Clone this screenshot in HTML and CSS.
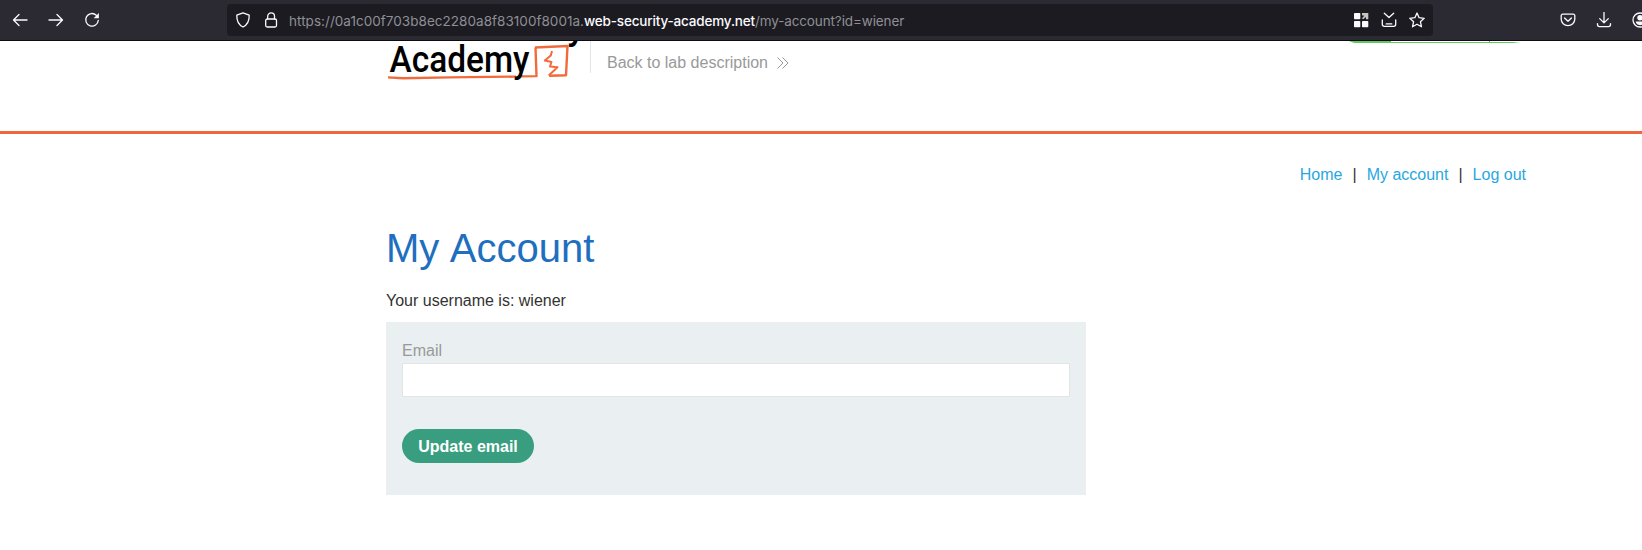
FILE: index.html
```html
<!DOCTYPE html>
<html lang="en">
<head>
<meta charset="utf-8">
<title>My Account</title>
<link rel="stylesheet" href="styles.css">
</head>
<body>
<div class="toolbar">
  <div class="nav-buttons">
    <svg class="icon" viewBox="0 0 16 16"><path d="M15 8H2M7 2.5 1.5 8 7 13.5"/></svg>
    <svg class="icon" viewBox="0 0 16 16"><path d="M1 8h13M9 2.5 14.5 8 9 13.5"/></svg>
    <svg class="icon" viewBox="0 0 16 16"><path d="M12.3 3.2A6.3 6.3 0 1 0 14.3 8.3"/><path class="solid" d="M14.9 1v5.2H9.6z"/></svg>
  </div>
  <div class="urlbar">
    <svg class="icon" viewBox="0 0 16 16"><path d="M8 .9 14.2 3.2C14.4 8.500 12.6 12.600 8 15 3.400 12.600 1.600 8.500 1.800 3.200z"/></svg>
    <svg class="icon lock" viewBox="0 0 16 16"><rect x="2.700" y="7" width="10.800" height="8" rx="1.500"/><path d="M4.700 7V4.300a3.400 3.400 0 0 1 6.800 0V7"/></svg>
    <div class="url"><span class="sub">https://0a1c00f703b8ec2280a8f83100f8001a.</span><span class="domain">web-security-academy.net</span><span class="path">/my-account?id=wiener</span></div>
    <svg class="icon" viewBox="0 0 16 16"><g class="solid"><rect x="1" y="1" width="6.300" height="6.300" rx=".8"/><rect x="1" y="8.900" width="6.300" height="6.300" rx=".8"/><rect x="9" y="8.900" width="6.300" height="6.300" rx=".8"/><path class="dim" d="M9 1h6.300v6.300h-2.200L12.700 5 10.200 7.300 9 6.200 11.300 3.700 9 3.200z"/></g></svg>
    <svg class="icon inbox" viewBox="0 0 16 16"><path d="M3.300 1.300 8 5.600l4.700-4.300M1.300 8v4.300a2 2 0 0 0 2 2h9.400a2 2 0 0 0 2-2V8M5.200 11.900h5.600"/></svg>
    <svg class="icon" viewBox="0 0 16 16"><path d="m8 1 2.100 4.700 5.100.6-3.800 3.400 1.100 5.100L8 12.200l-4.500 2.600 1.100-5.100L.8 6.300l5.100-.6z"/></svg>
  </div>
  <div class="tools">
    <svg class="icon" viewBox="0 0 16 16"><path d="M2.600 2.200h10.800a1.400 1.400 0 0 1 1.400 1.400v3.700a6.800 6.300 0 0 1-13.600 0V3.600a1.400 1.400 0 0 1 1.400-1.400zM4.600 6 8 9.300 11.400 6"/></svg>
    <svg class="icon" viewBox="0 0 16 16"><path d="M8 .5v10.200M3.700 6.600 8 10.900l4.300-4.300M1.500 11.600v1a2 2 0 0 0 2 2h9a2 2 0 0 0 2-2v-1"/></svg>
    <svg class="icon" viewBox="0 0 16 16"><circle cx="8" cy="8" r="7"/><circle class="solid" cx="8" cy="5.800" r="2.700"/><path class="solid" d="M3.600 9.600h8.800A4.600 4.600 0 0 1 8 13.200a4.600 4.600 0 0 1-4.400-3.600z"/></svg>
  </div>
</div>
<header class="lab-header">
  <div class="brand">
    <svg class="logo" viewBox="386 41 204 42" width="204" height="42">
      <path class="sketch" d="M388 77.400 403 78.200 450 77.400 516 76.600M520 76.400l16.500-.3L535.500 47.500"/>
      <path class="sketch" d="M535 47.500 567.500 46 566 75.200 550 75.800 549.500 74"/>
      <path class="sketch thin" d="M552 51 550.800 55.500 544.800 60.500 551.500 62 550 66.500 557.500 67.200 549 75.300"/>
      <text class="logo-text" x="389.500" y="72.300" textLength="140" lengthAdjust="spacingAndGlyphs">Academy</text>
      <text class="logo-text" x="567" y="39.200">y</text>
    </svg>
  </div>
  <a class="back">Back to lab description
    <svg width="14" height="14" viewBox="0 0 14 14"><path d="M1.500 1.500 7 7l-5.500 5.500M6.500 1.500 12 7l-5.500 5.500"/></svg>
  </a>
  <svg class="status" viewBox="0 0 172 3" width="172" height="3"><path d="M0 0H42V1H140V0h1V1H171L164 2H5z"/></svg>
</header>
<main class="container">
  <nav class="links"><a>Home</a><span>|</span><a>My account</a><span>|</span><a>Log out</a></nav>
  <h1>My Account</h1>
  <p class="username">Your username is: wiener</p>
  <form class="account-form">
    <label for="email">Email</label>
    <input id="email" type="email">
    <button type="button">Update email</button>
  </form>
</main>
</body>
</html>
```
FILE: styles.css
```css
* { box-sizing: border-box; }
body {
  margin: 0;
  height: 550px;
  overflow: hidden;
  background: #fff;
  color: #333332;
  font: 16px/20px "Liberation Sans", Arial, sans-serif;
}
.toolbar {
  display: flex;
  align-items: center;
  height: 41px;
  background: #2b2a33;
  border-bottom: 1px solid #0c0c0d;
  overflow: hidden;
}
.icon {
  flex: none;
  width: 16px;
  height: 16px;
  fill: none;
  stroke: #fbfbfe;
  stroke-width: 1.3;
  stroke-linecap: round;
  stroke-linejoin: round;
}
.solid { fill: #fbfbfe; stroke: none; }
.dim { fill: #c5c6bd; }
.nav-buttons { display: flex; flex: none; gap: 20px; width: 227px; padding-left: 12px; }
.urlbar {
  display: flex;
  flex: none;
  align-items: center;
  gap: 12px;
  width: 1206px;
  height: 32px;
  padding: 0 8px;
  border-radius: 4px;
  background: #1c1b22;
}
.lock { margin-right: -2px; }
.url {
  display: flex;
  flex: 1;
  padding-top: 2px;
  color: #8f8f94;
  font: 13.5px/20px Inter, sans-serif;
  white-space: nowrap;
}
.sub { letter-spacing: 0.035px; }
.domain { color: #fbfbfe; font-weight: 500; letter-spacing: -0.17px; }
.path { letter-spacing: -0.12px; }
.tools { display: flex; flex: none; gap: 20px; padding-left: 127px; }

.lab-header {
  display: flex;
  align-items: flex-start;
  height: 93px;
  padding-left: 386px;
  border-bottom: 3px solid #ee6640;
}
.brand {
  width: 205px;
  height: 32px;
  border-right: 1px solid #e4e4e4;
}
.logo { display: block; overflow: hidden; }
.logo-text { font: 500 37px Roboto, sans-serif; fill: #000; }
.sketch { fill: none; stroke: #f26a3c; stroke-width: 2.4; stroke-linejoin: round; }
.thin { stroke-width: 2; }
.back {
  display: flex;
  align-items: center;
  gap: 8px;
  padding: 12px 0 0 16px;
  color: #999;
}
.back svg { fill: none; stroke: #999; stroke-width: 1; }
.status { margin-left: 559px; fill: #62c862; }

.container { width: 1140px; margin-left: 386px; }
.links {
  display: flex;
  justify-content: flex-end;
  gap: 10px;
  padding-top: 31px;
}
.links a { color: #29a7df; }
h1 {
  margin: 41px 0 0;
  color: #1e6fbf;
  font-size: 40px;
  line-height: 44px;
  font-weight: 400;
  word-spacing: 1.5px;
}
.username { margin: 21px 0 11px; }
.account-form {
  display: flex;
  flex-direction: column;
  align-items: flex-start;
  width: 700px;
  height: 173px;
  padding: 19px 16px;
  background: #eaeff2;
}
.account-form label { color: #999; }
.account-form input {
  width: 668px;
  height: 34px;
  margin: 2px 0 32px;
  border: 1px solid #e4e4e4;
  background: #fff;
}
.account-form button {
  width: 132px;
  height: 34px;
  padding: 1px 0 0;
  border: 0;
  border-radius: 17px;
  background: #389e7f;
  color: #fff;
  font: bold 16px "Liberation Sans", Arial, sans-serif;
}
```
